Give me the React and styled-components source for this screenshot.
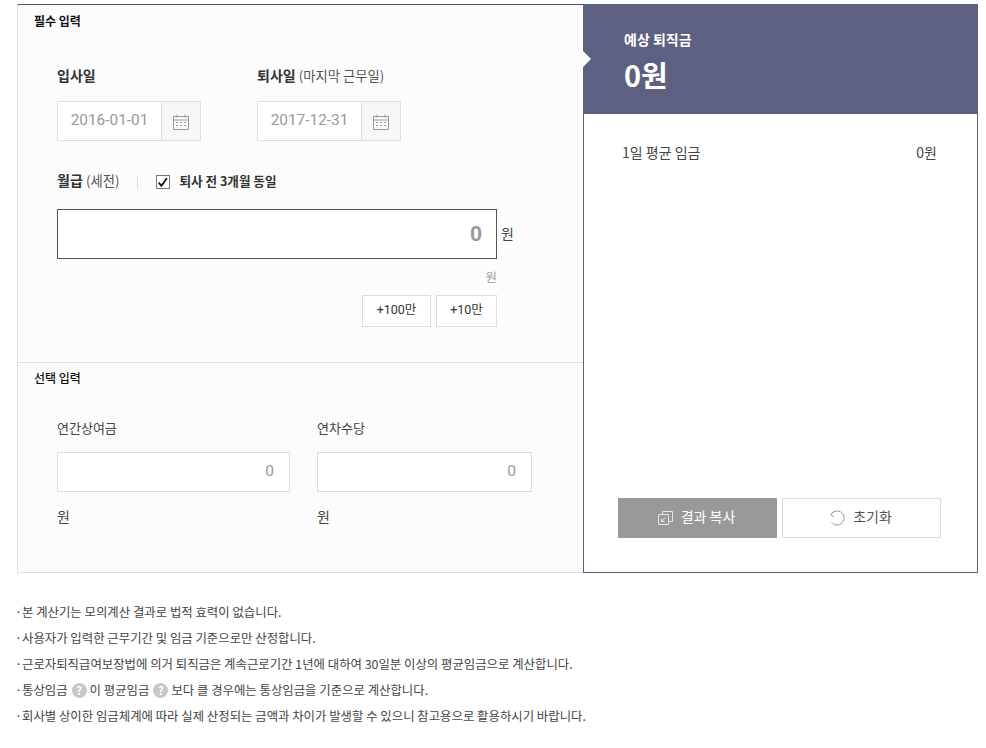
import React from "react";
import styled, { createGlobalStyle } from "styled-components";

const GlobalStyle = createGlobalStyle`
  html, body {
    margin: 0;
    padding: 0;
    background: #fff;
    color: #333;
    font-family: "Noto Sans CJK KR", "Noto Sans", sans-serif;
  }
  * { box-sizing: border-box; }
`;

const Page = styled.div`
  width: 986px;
  height: 748px;
  padding: 4px 8px 0 17px;
  overflow: hidden;
`;

const Calculator = styled.div`
  display: grid;
  grid-template-columns: 566px 395px;
  height: 569px;
`;

const InputPanel = styled.div`
  display: flex;
  flex-direction: column;
  background: #fcfcfc;
  border-top: 1px solid #555;
  border-left: 1px solid #ddd;
  border-bottom: 1px solid #ddd;
`;

const RequiredSection = styled.section`
  height: 358px;
  padding: 7px 0 0 16px;
  border-bottom: 1px solid #ddd;
`;

const OptionalSection = styled.section`
  padding: 6px 0 0 16px;
`;

const SectionTitle = styled.h3`
  margin: 0;
  font-size: 12px;
  line-height: 17px;
  font-weight: ${(p) => (p.$bold ? 700 : 500)};
  color: #111;
`;

const DateRow = styled.div`
  display: flex;
  gap: 56px;
  margin: 36px 0 0 23px;
`;

const Field = styled.div`
  width: 144px;
`;

const Label = styled.div`
  height: 20px;
  font-size: 14px;
  line-height: 20px;
  font-weight: 700;
  color: #333;
  white-space: nowrap;
`;

const LabelNote = styled.span`
  font-size: 13.3px;
  font-weight: 400;
  color: #555;
`;

const DateBox = styled.div`
  display: flex;
  height: 40px;
  margin-top: 16px;
  border: 1px solid #ddd;
  background: #fff;
`;

const DateInput = styled.input`
  width: 103px;
  border: 0;
  padding: 0 0 2px;
  background: transparent;
  font: 400 15.4px Roboto, sans-serif;
  color: #999;
  text-align: center;
  outline: none;
`;

const DateButton = styled.div`
  flex: 1;
  display: flex;
  align-items: center;
  justify-content: center;
  padding-top: 2px;
  border-left: 1px solid #ddd;
  background: #f7f7f7;
`;

const WageHead = styled.div`
  display: flex;
  align-items: center;
  height: 20px;
  margin: 29px 0 0 23px;
`;

const Divider = styled.span`
  width: 1px;
  height: 14px;
  margin: 3px 18px 0 18px;
  background: #ddd;
`;

const CheckBox = styled.span`
  display: flex;
  width: 14px;
  height: 14px;
  margin: 3px 9px 0 0;
  border: 1px solid #777;
  background: #fff;
`;

const CheckLabel = styled.span`
  font-size: 12.6px;
  font-weight: 700;
  color: #333;
`;

const WageRow = styled.div`
  display: flex;
  align-items: center;
  margin: 19px 0 0 23px;
`;

const WageInput = styled.input`
  width: 440px;
  height: 50px;
  border: 1px solid #555;
  padding: 0 14px 0 0;
  background: #fff;
  font: 700 21px Roboto, sans-serif;
  color: #999;
  text-align: right;
  outline: none;
`;

const Unit = styled.span`
  margin: 0 0 3px 4px;
  font-size: 14px;
  color: #444;
`;

const UnitHint = styled.div`
  width: 440px;
  margin: 10px 0 0 23px;
  font-size: 12.5px;
  line-height: 16px;
  color: #a09a92;
  text-align: right;
`;

const QuickRow = styled.div`
  display: flex;
  justify-content: flex-end;
  gap: 5px;
  width: 440px;
  margin: 10px 0 0 23px;
`;

const QuickButton = styled.button`
  width: ${(p) => p.$width}px;
  height: 32px;
  padding: 0 0 6px;
  border: 1px solid #ddd;
  background: #fff;
  font: 400 12.5px Roboto, "Noto Sans CJK KR", sans-serif;
  color: #333;
`;

const OptionalRow = styled.div`
  display: flex;
  gap: 27px;
  margin: 32px 0 0 23px;
`;

const OptionalField = styled.div`
  width: ${(p) => p.$width}px;
`;

const OptionalLabel = styled.div`
  font-size: 13px;
  line-height: 20px;
  color: #444;
`;

const AmountInput = styled.input`
  display: block;
  width: 100%;
  height: 40px;
  margin-top: 14px;
  border: 1px solid #ddd;
  padding: 0 15px 2px 0;
  background: #fff;
  font: 400 15.5px Roboto, sans-serif;
  color: #999;
  text-align: right;
  outline: none;
`;

const AmountUnit = styled.div`
  margin-top: 14px;
  font-size: 14px;
  line-height: 20px;
  color: #444;
`;

const ResultPanel = styled.div`
  display: flex;
  flex-direction: column;
  background: #fff;
  border: 1px solid #5d6080;
  border-top: 0;
`;

const ResultHead = styled.div`
  position: relative;
  height: 110px;
  margin: 0 -1px;
  padding: 26px 0 0 41px;
  background: #5d6080;
  color: #fff;
  &:before {
    content: "";
    position: absolute;
    left: 0;
    top: 47px;
    border-style: solid;
    border-width: 8px 0 8px 8px;
    border-color: transparent transparent transparent #fff;
  }
`;

const ResultTitle = styled.div`
  font-size: 14px;
  line-height: 19px;
  font-weight: 700;
`;

const ResultValue = styled.div`
  margin-top: 6px;
  font-size: 29px;
  line-height: 38px;
  font-weight: 700;
`;

const ResultBody = styled.div`
  flex: 1;
  display: flex;
  flex-direction: column;
  justify-content: space-between;
  padding: 28px 36px 34px 34px;
`;

const ResultRow = styled.div`
  display: flex;
  justify-content: space-between;
  padding: 0 4px;
  font-size: 14px;
  line-height: 20px;
  color: #444;
`;

const ActionRow = styled.div`
  display: flex;
  gap: 5px;
`;

const ActionButton = styled.button`
  display: flex;
  align-items: center;
  justify-content: center;
  gap: 8px;
  width: 159px;
  height: 40px;
  padding: 0 2px 5px 0;
  border: 1px solid ${(p) => (p.$primary ? "#999" : "#ddd")};
  background: ${(p) => (p.$primary ? "#999" : "#fff")};
  font: 400 14px "Noto Sans CJK KR", "Noto Sans", sans-serif;
  color: ${(p) => (p.$primary ? "#fff" : "#555")};
  svg {
    margin-top: 5px;
  }
`;

const Notes = styled.ul`
  margin: 26px 0 0;
  padding: 0;
  list-style: none;
`;

const Note = styled.li`
  display: flex;
  align-items: center;
  gap: 3px;
  height: 26px;
  font-size: 12.4px;
  color: #444;
  white-space: nowrap;
  &:before {
    content: "·";
    width: 4px;
    margin-left: -2px;
  }
`;

const HelpIcon = styled.span`
  display: inline-flex;
  align-items: center;
  justify-content: center;
  width: 15px;
  height: 15px;
  margin-left: 1px;
  border-radius: 50%;
  background: #c8c8c8;
  font-size: 11px;
  font-weight: 700;
  color: #fff;
`;

const CalendarIcon = () => (
  <svg width="16" height="16" viewBox="0 0 16 16" fill="none" stroke="#999">
    <path d="M.5 2.5h15v13H.5zM.5 6h15M4 .5v3M12 .5v3" />
    <path d="M3 8.5h2M7 8.5h2M11 8.5h2M3 11.5h2M7 11.5h2M11 11.5h2" />
  </svg>
);

const CheckIcon = () => (
  <svg width="14" height="14" viewBox="0 0 14 14" fill="none" stroke="#111" strokeWidth="2.2">
    <path d="M2 6.5l3.2 3.8L11.5 1.5" />
  </svg>
);

const CopyIcon = () => (
  <svg width="15" height="14" viewBox="0 0 15 14" fill="none" stroke="#e6e6e6">
    <path d="M4.5 3V.5h10v10H11" />
    <path d="M.5 3.5h10v10H.5z" />
    <path d="M7.5 6.5L3.5 10.5M3.5 7.5v3h3" />
  </svg>
);

const ResetIcon = () => (
  <svg width="16" height="16" viewBox="0 0 16 16" fill="none" stroke="#999">
    <path d="M2 4.5C3.2 2.3 5.6 1 8 1a7 7 0 1 1-5.5 11.3" />
    <path d="M4.5 1.5l-3 3L5 7" />
  </svg>
);

const App = () => (
  <Page>
    <GlobalStyle />
    <Calculator>
      <InputPanel>
        <RequiredSection>
          <SectionTitle $bold>필수 입력</SectionTitle>
          <DateRow>
            <Field>
              <Label>입사일</Label>
              <DateBox>
                <DateInput readOnly value="2016-01-01" />
                <DateButton><CalendarIcon /></DateButton>
              </DateBox>
            </Field>
            <Field>
              <Label>퇴사일 <LabelNote>(마지막 근무일)</LabelNote></Label>
              <DateBox>
                <DateInput readOnly value="2017-12-31" />
                <DateButton><CalendarIcon /></DateButton>
              </DateBox>
            </Field>
          </DateRow>
          <WageHead>
            <Label>월급 <LabelNote>(세전)</LabelNote></Label>
            <Divider />
            <CheckBox><CheckIcon /></CheckBox>
            <CheckLabel>퇴사 전 3개월 동일</CheckLabel>
          </WageHead>
          <WageRow>
            <WageInput readOnly value="0" />
            <Unit>원</Unit>
          </WageRow>
          <UnitHint>원</UnitHint>
          <QuickRow>
            <QuickButton $width={69}>+100만</QuickButton>
            <QuickButton $width={61}>+10만</QuickButton>
          </QuickRow>
        </RequiredSection>
        <OptionalSection>
          <SectionTitle>선택 입력</SectionTitle>
          <OptionalRow>
            <OptionalField $width={233}>
              <OptionalLabel>연간상여금</OptionalLabel>
              <AmountInput readOnly value="0" />
              <AmountUnit>원</AmountUnit>
            </OptionalField>
            <OptionalField $width={215}>
              <OptionalLabel>연차수당</OptionalLabel>
              <AmountInput readOnly value="0" />
              <AmountUnit>원</AmountUnit>
            </OptionalField>
          </OptionalRow>
        </OptionalSection>
      </InputPanel>
      <ResultPanel>
        <ResultHead>
          <ResultTitle>예상 퇴직금</ResultTitle>
          <ResultValue>0원</ResultValue>
        </ResultHead>
        <ResultBody>
          <ResultRow>
            <span>1일 평균 임금</span>
            <span>0원</span>
          </ResultRow>
          <ActionRow>
            <ActionButton $primary><CopyIcon />결과 복사</ActionButton>
            <ActionButton><ResetIcon />초기화</ActionButton>
          </ActionRow>
        </ResultBody>
      </ResultPanel>
    </Calculator>
    <Notes>
      <Note>본 계산기는 모의계산 결과로 법적 효력이 없습니다.</Note>
      <Note>사용자가 입력한 근무기간 및 임금 기준으로만 산정합니다.</Note>
      <Note>근로자퇴직급여보장법에 의거 퇴직금은 계속근로기간 1년에 대하여 30일분 이상의 평균임금으로 계산합니다.</Note>
      <Note>통상임금 <HelpIcon>?</HelpIcon> 이 평균임금 <HelpIcon>?</HelpIcon> 보다 클 경우에는 통상임금을 기준으로 계산합니다.</Note>
      <Note>회사별 상이한 임금체계에 따라 실제 산정되는 금액과 차이가 발생할 수 있으니 참고용으로 활용하시기 바랍니다.</Note>
    </Notes>
  </Page>
);

export default App;
